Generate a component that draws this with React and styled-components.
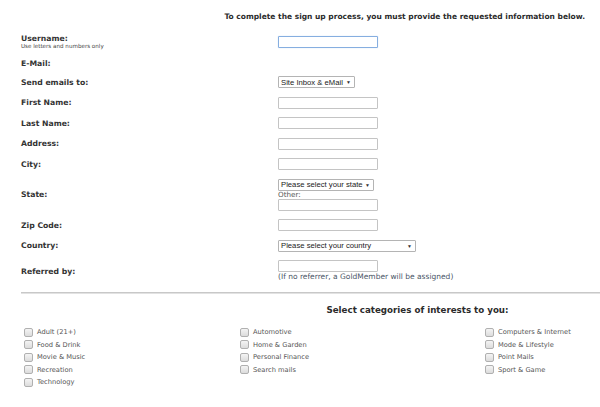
import styled, { createGlobalStyle } from 'styled-components'

const GlobalStyle = createGlobalStyle`
  html, body {
    margin: 0;
    padding: 0;
    background: #fff;
  }
  body {
    font-family: "DejaVu Sans", Verdana, sans-serif;
    color: #333;
  }
`

const categories = [
  ['Adult (21+)', 'Automotive', 'Computers & Internet'],
  ['Food & Drink', 'Home & Garden', 'Mode & Lifestyle'],
  ['Movie & Music', 'Personal Finance', 'Point Mails'],
  ['Recreation', 'Search mails', 'Sport & Game'],
  ['Technology'],
]

export const App = () => (
  <Page>
    <GlobalStyle />
    <Intro>To complete the sign up process, you must provide the requested information below.</Intro>
    <Form>
      <Label>
        Username:
        <Hint>Use letters and numbers only</Hint>
      </Label>
      <Field><TextInput focused /></Field>

      <Label>E-Mail:</Label>
      <Field />

      <Label>Send emails to:</Label>
      <Field><SelectBox width={77}>Site Inbox &amp; eMail<Arrow>▼</Arrow></SelectBox></Field>

      <Label>First Name:</Label>
      <Field><TextInput /></Field>

      <Label>Last Name:</Label>
      <Field><TextInput /></Field>

      <Label>Address:</Label>
      <Field><TextInput /></Field>

      <Label>City:</Label>
      <Field><TextInput /></Field>

      <Label>State:</Label>
      <Field>
        <SelectBox width={96}>Please select your state<Arrow>▼</Arrow></SelectBox>
        <Small>Other:</Small>
        <TextInput />
      </Field>

      <Label>Zip Code:</Label>
      <Field><TextInput /></Field>

      <Label>Country:</Label>
      <Field><SelectBox width={138}>Please select your country<Arrow>▼</Arrow></SelectBox></Field>

      <Label>Referred by:</Label>
      <Field>
        <TextInput />
        <Note>(If no referrer, a GoldMember will be assigned)</Note>
      </Field>
    </Form>

    <Rule />
    <Interests>
      <InterestsTitle>Select categories of interests to you:</InterestsTitle>
      <CheckGrid>
        {categories.flatMap((row, r) => row.map((name, c) => (
          <CheckItem key={name} style={{ gridRow: r + 1, gridColumn: c + 1 }}>
            <Box />
            {name}
          </CheckItem>
        )))}
      </CheckGrid>
    </Interests>
    <Rule />
  </Page>
)

const Page = styled.div`
  width: 600px;
  padding: 12px 0 0 21px;
  box-sizing: border-box;
`

const Intro = styled.div`
  font-size: 7.5px;
  font-weight: bold;
  color: #2b2b2b;
  text-align: right;
  padding-right: 15px;
  line-height: 10px;
`

const Form = styled.div`
  display: grid;
  grid-template-columns: 257px 1fr;
  row-gap: 8.5px;
  align-items: center;
  margin-top: 12px;
`

const Label = styled.div`
  font-size: 7.7px;
  font-weight: bold;
  color: #333;
  line-height: 9px;
`

const Hint = styled.div`
  font-size: 5.6px;
  font-weight: normal;
  color: #444;
  line-height: 7px;
`

const Field = styled.div`
  display: flex;
  flex-direction: column;
  align-items: flex-start;
  min-height: 9px;
`

const TextInput = styled.div`
  width: 100px;
  height: 12px;
  box-sizing: border-box;
  border: 1px solid ${(p) => (p.focused ? '#86aee0' : '#c4c4c4')};
  border-radius: 1px;
  background: #fff;
  box-shadow: ${(p) => (p.focused ? '0 0 1px #a9c6ec' : 'none')};
`

const SelectBox = styled.div`
  width: ${(p) => p.width}px;
  height: 12px;
  box-sizing: border-box;
  border: 1px solid #b4b4b4;
  border-radius: 1px;
  background: #fff;
  display: flex;
  align-items: center;
  justify-content: space-between;
  padding: 0 3px 0 2px;
  font-family: "Liberation Sans", Arial, sans-serif;
  font-size: 7.7px;
  color: #222;
  white-space: nowrap;
`

const Arrow = styled.span`
  font-size: 5px;
  color: #333;
`

const Small = styled.div`
  font-size: 7.2px;
  color: #555;
  line-height: 8px;
`

const Note = styled.div`
  font-size: 7.5px;
  color: #4a5566;
  line-height: 10px;
`

const Rule = styled.div`
  height: 1px;
  background: #c8c8c8;
  border-bottom: 1px solid #e2e2e2;
  margin-top: 10px;
`

const Interests = styled.div`
  padding: 11px 0 9px;
`

const InterestsTitle = styled.div`
  font-size: 8.7px;
  font-weight: bold;
  color: #2b2b2b;
  text-align: center;
  padding-left: 214px;
  line-height: 10px;
`

const CheckGrid = styled.div`
  display: grid;
  grid-template-columns: 216px 245px 1fr;
  grid-auto-rows: 12.5px;
  margin-top: 11px;
  padding-left: 3px;
`

const CheckItem = styled.label`
  display: flex;
  align-items: center;
  gap: 4px;
  font-size: 6.7px;
  color: #555;
  white-space: nowrap;
`

const Box = styled.span`
  width: 7px;
  height: 7px;
  border: 1px solid #b0b0b0;
  border-radius: 2px;
  background: linear-gradient(#f4f4f4, #dcdcdc);
  flex: none;
`

export default App
